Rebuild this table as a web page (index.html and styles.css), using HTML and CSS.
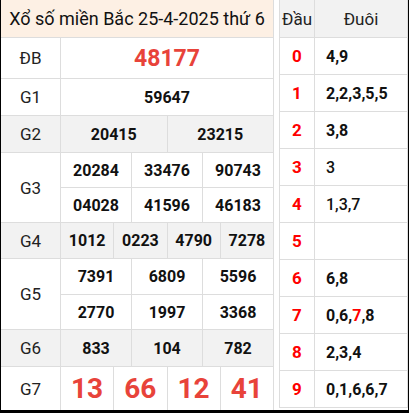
FILE: index.html
```html
<!DOCTYPE html>
<html lang="vi">
<head>
<meta charset="utf-8">
<link rel="stylesheet" href="styles.css">
</head>
<body>
<div class="page">
  <div class="kq">
    <div class="title">Xổ số miền Bắc 25-4-2025 thứ 6</div>

    <div class="lbl r-db">ĐB</div>
    <div class="num special s12">48177</div>

    <div class="lbl">G1</div>
    <div class="num s12">59647</div>

    <div class="lbl alt">G2</div>
    <div class="num alt s6">20415</div>
    <div class="num alt s6">23215</div>

    <div class="lbl span2">G3</div>
    <div class="num s4">20284</div>
    <div class="num s4">33476</div>
    <div class="num s4">90743</div>
    <div class="num s4">04028</div>
    <div class="num s4">41596</div>
    <div class="num s4">46183</div>

    <div class="lbl alt">G4</div>
    <div class="num alt s3">1012</div>
    <div class="num alt s3">0223</div>
    <div class="num alt s3">4790</div>
    <div class="num alt s3">7278</div>

    <div class="lbl span2">G5</div>
    <div class="num s4">7391</div>
    <div class="num s4">6809</div>
    <div class="num s4">5596</div>
    <div class="num s4">2770</div>
    <div class="num s4">1997</div>
    <div class="num s4">3368</div>

    <div class="lbl alt">G6</div>
    <div class="num alt s4">833</div>
    <div class="num alt s4">104</div>
    <div class="num alt s4">782</div>

    <div class="lbl">G7</div>
    <div class="num big s3">13</div>
    <div class="num big s3">66</div>
    <div class="num big s3">12</div>
    <div class="num big s3">41</div>
  </div>

  <div class="loto">
    <div class="hd">Đầu</div>
    <div class="hd">Đuôi</div>

    <div class="dau">0</div><div class="duoi">4,9</div>
    <div class="dau">1</div><div class="duoi">2,2,3,5,5</div>
    <div class="dau">2</div><div class="duoi">3,8</div>
    <div class="dau">3</div><div class="duoi thin">3</div>
    <div class="dau">4</div><div class="duoi thin">1,3,7</div>
    <div class="dau">5</div><div class="duoi"></div>
    <div class="dau">6</div><div class="duoi">6,8</div>
    <div class="dau">7</div><div class="duoi">0,6,<span class="hit">7</span>,8</div>
    <div class="dau">8</div><div class="duoi">2,3,4</div>
    <div class="dau">9</div><div class="duoi">0,1,6,6,7</div>
  </div>
</div>
</body>
</html>
```

FILE: styles.css
```css
html, body {
  margin: 0;
  padding: 0;
  background: #000;
}

body {
  font-family: Roboto, "Liberation Sans", Arial, sans-serif;
  color: #111;
}

.page {
  margin-left: 1px;
  width: 407px;
  height: 410px;
  background: #fff;
  display: flex;
  align-items: flex-start;
  gap: 5px;
}

.kq {
  width: 273px;
  box-sizing: border-box;
  padding-right: 1px;
  display: grid;
  grid-template-columns: 59px repeat(12, 1fr);
  grid-template-rows: 37px 40px 36px 36px 34px 34px 35px 35px 34px 36px 43px;
  gap: 1px;
  background: #ddd;
}

.kq > div {
  display: flex;
  align-items: center;
  justify-content: center;
  background: #fff;
}

.title {
  grid-column: 1 / -1;
  background: #fdf0e4 !important;
  font-size: 18px;
  color: #111;
}

.lbl {
  font-size: 17px;
  color: #222;
}

.span2 {
  grid-row: span 2;
}

.num {
  font-size: 16px;
  font-weight: 700;
  color: #111;
}

.s12 { grid-column: span 12; }
.s6 { grid-column: span 6; }
.s4 { grid-column: span 4; }
.s3 { grid-column: span 3; }

.kq > .alt {
  background: #f2f2f2;
}

.special {
  font-size: 23px;
  color: #e8433a;
}

.big {
  font-size: 28px;
  color: #e8433a;
}

.loto {
  width: 129px;
  box-sizing: border-box;
  padding: 0 1px 1px 1px;
  display: grid;
  grid-template-columns: 34px 1fr;
  grid-template-rows: 37px repeat(10, 36px);
  gap: 1px;
  background: #ddd;
}

.loto > div {
  display: flex;
  align-items: center;
  background: #fff;
}

.hd {
  justify-content: center;
  font-size: 17px;
  color: #222;
  background: #f2f2f2 !important;
}

.dau {
  justify-content: center;
  font-size: 17px;
  font-weight: 700;
  color: #f00;
}

.duoi {
  padding-left: 11px;
  font-size: 16px;
  font-weight: 700;
  color: #111;
}

.duoi.thin {
  font-weight: 500;
}

.hit {
  color: #f00;
}
```
